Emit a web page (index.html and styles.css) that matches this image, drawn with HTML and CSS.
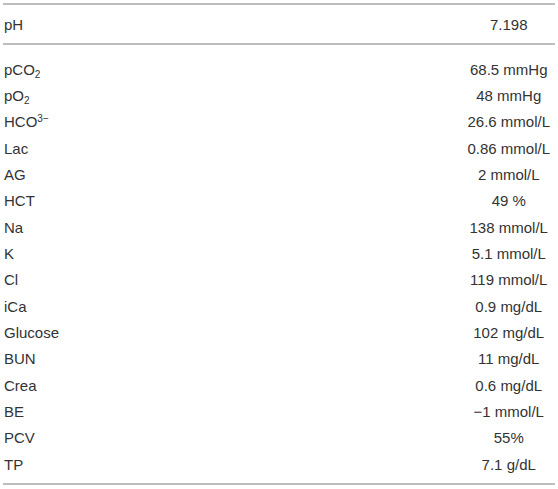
FILE: index.html
```html
<!DOCTYPE html>
<html>
<head>
<meta charset="utf-8">
<link rel="stylesheet" href="styles.css">
</head>
<body>
<table class="lab">
  <thead>
    <tr><th class="name">pH</th><th class="val">7.198</th></tr>
  </thead>
  <tbody>
    <tr class="first"><td class="name">pCO<sub>2</sub></td><td class="val">68.5 mmHg</td></tr>
    <tr><td class="name">pO<sub>2</sub></td><td class="val">48 mmHg</td></tr>
    <tr><td class="name">HCO<sup>3−</sup></td><td class="val">26.6 mmol/L</td></tr>
    <tr><td class="name">Lac</td><td class="val">0.86 mmol/L</td></tr>
    <tr><td class="name">AG</td><td class="val">2 mmol/L</td></tr>
    <tr><td class="name">HCT</td><td class="val">49 %</td></tr>
    <tr><td class="name">Na</td><td class="val">138 mmol/L</td></tr>
    <tr><td class="name">K</td><td class="val">5.1 mmol/L</td></tr>
    <tr><td class="name">Cl</td><td class="val">119 mmol/L</td></tr>
    <tr><td class="name">iCa</td><td class="val">0.9 mg/dL</td></tr>
    <tr><td class="name">Glucose</td><td class="val">102 mg/dL</td></tr>
    <tr><td class="name">BUN</td><td class="val">11 mg/dL</td></tr>
    <tr><td class="name">Crea</td><td class="val">0.6 mg/dL</td></tr>
    <tr><td class="name">BE</td><td class="val">−1 mmol/L</td></tr>
    <tr><td class="name">PCV</td><td class="val">55%</td></tr>
    <tr class="last"><td class="name">TP</td><td class="val">7.1 g/dL</td></tr>
  </tbody>
</table>
</body>
</html>
```
FILE: styles.css
```css
html, body {
  margin: 0;
  padding: 0;
  background: #ffffff;
}
body {
  padding: 3px 3px 0 3px;
  font-family: "Liberation Sans", Arial, Helvetica, sans-serif;
  font-size: 15px;
  color: #333333;
}
.lab {
  width: 552px;
  border-collapse: collapse;
  border-top: 2px solid #bdbdbd;
  border-bottom: 2px solid #bdbdbd;
}
.lab thead tr {
  border-bottom: 2px solid #bdbdbd;
}
.lab th {
  font-weight: normal;
  height: 38px;
  padding: 0;
  line-height: 17px;
  vertical-align: middle;
}
.lab td {
  height: 26.33px;
  padding: 0;
  line-height: 17px;
  vertical-align: middle;
}
.lab .name {
  width: 100%;
  text-align: left;
  padding-left: 1px;
}
.lab .val {
  text-align: center;
  padding: 0 5px;
  white-space: nowrap;
}
.lab tr.first td {
  padding-top: 11px;
}
.lab tr.last td {
  padding-bottom: 6px;
}
sub, sup {
  font-size: 10px;
  line-height: 0;
}
sub {
  vertical-align: -3px;
}
sup {
  vertical-align: 5px;
}
```
